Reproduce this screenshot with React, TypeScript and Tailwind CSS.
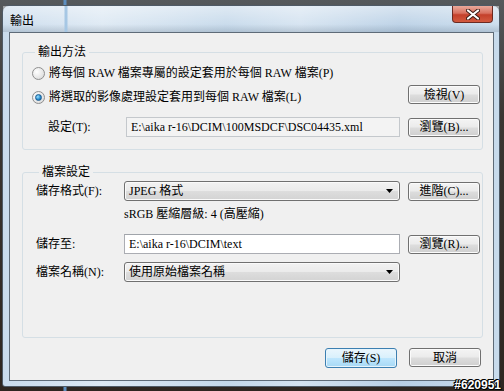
import React from 'react'

// Vista-style "輸出" dialog

const btn =
  'flex items-center justify-center h-[19px] w-[72px] rounded-[3px] border border-[#707070] bg-[linear-gradient(to_bottom,#f4f4f4_0%,#ebebeb_48%,#dddddd_52%,#cfcfcf_100%)] shadow-[inset_0_0_0_1px_#fbfbfb] text-[12px] leading-none text-black'

const Button = ({ label, primary = false, w = 'w-[72px]' }: { label: string; primary?: boolean; w?: string }) => (
  <div
    className={
      primary
        ? `flex items-center justify-center h-[20px] ${w} rounded-[3px] border border-[#3c7fb1] bg-[linear-gradient(to_bottom,#eaf6fd_0%,#d9f0fc_48%,#bee6fd_52%,#a7d9f5_100%)] shadow-[inset_0_0_0_1px_#e6f4fc] text-[12px] leading-none text-black`
        : `${btn} ${w}`
    }
  >
    {label}
  </div>
)

const Dropdown = ({ value }: { value: string }) => (
  <div className="flex items-center h-[20px] w-[276px] rounded-[3px] border border-[#707070] bg-[linear-gradient(to_bottom,#f2f2f2_0%,#ebebeb_48%,#dddddd_52%,#d3d3d3_100%)] shadow-[inset_0_0_0_1px_#fafafa] pl-[4px] pr-[4px] text-[12px] text-black">
    <span className="flex-1">{value}</span>
    <svg width="8" height="5" viewBox="0 0 8 5" className="mr-[1px]">
      <path d="M0 0h7L3.5 4z" fill="#000" />
    </svg>
  </div>
)

const Radio = ({ checked }: { checked?: boolean }) => (
  <div className="flex items-center justify-center w-[13px] h-[13px] rounded-full border border-[#8f8f8f] bg-[radial-gradient(circle_at_35%_35%,#ffffff_0%,#e6e6e6_60%,#d0d0d0_100%)]">
    {checked && (
      <div className="w-[7px] h-[7px] rounded-full bg-[radial-gradient(circle_at_35%_35%,#9ce1ff_0%,#2a8fd0_55%,#0d4f8a_100%)] border border-[#1c5d92]" />
    )}
  </div>
)

export default function App() {
  return (
    <div className="relative w-[504px] h-[391px] overflow-hidden bg-[linear-gradient(to_right,transparent_63px,#5d8fc0_64px,#5d8fc0_66px,transparent_67px),linear-gradient(to_bottom,#55595c_0%,#3b3632_30%,#2e2620_100%)] pt-[5px] pl-[2px] font-['Liberation_Serif','Noto_Sans_CJK_TC',serif] text-black">
      {/* window frame */}
      <div className="w-[498px] h-[382px] rounded-t-[7px] rounded-b-[3px] border border-[#4e5a66] bg-[linear-gradient(to_right,#c9dbec_0%,#dce8f3_20%,#c4d8ea_45%,#d3e2f0_60%,#b8cfe5_80%,#c8dbec_100%)] flex flex-col">
        {/* title bar */}
        <div className="h-[26px] flex items-start bg-[linear-gradient(to_right,transparent_61px,#a6c7e4_62px,#a6c7e4_64px,transparent_65px),linear-gradient(to_bottom,rgba(255,255,255,0.45)_0%,rgba(255,255,255,0.1)_70%,rgba(80,95,110,0.2)_100%)]">
          <span className="ml-[7px] mt-[8px] text-[12px] leading-[14px]">輸出</span>
          <div className="ml-auto mr-[6px] w-[41px] h-[17px] rounded-b-[4px] border border-t-0 border-[#6b2a22] bg-[linear-gradient(to_bottom,#e9a99b_0%,#d8705f_45%,#c4402b_55%,#d35a3f_100%)] flex items-center justify-center">
            <svg width="14" height="11" viewBox="0 0 14 11">
              <path d="M2 1.5l10 8M12 1.5l-10 8" stroke="#3a1a14" strokeWidth="4" strokeLinecap="round" />
              <path d="M2 1.5l10 8M12 1.5l-10 8" stroke="#ffffff" strokeWidth="2.2" strokeLinecap="round" />
            </svg>
          </div>
        </div>

        {/* client area */}
        <div className="ml-[6px] w-[485px] h-[349px] border border-[#5e6b78] bg-[#f0f0f0] flex flex-col">
          {/* 輸出方法 */}
          <fieldset className="mt-[11px] ml-[12px] w-[461px] rounded-[3px] border border-[#d5dfe5] pl-[9px] pr-[2px] pb-[12px]">
            <legend className="ml-[3px] px-[3px] text-[12px] leading-[16px]">輸出方法</legend>
            <div className="mt-[5px] h-[16px] flex items-center gap-[4px] text-[12px]">
              <Radio />
              <span>將每個 RAW 檔案專屬的設定套用於每個 RAW 檔案(P)</span>
            </div>
            <div className="mt-[4px] h-[20px] flex justify-between">
              <div className="self-end h-[16px] flex items-center gap-[4px] text-[12px]">
                <Radio checked />
                <span>將選取的影像處理設定套用到每個 RAW 檔案(L)</span>
              </div>
              <Button label="檢視(V)" />
            </div>
            <div className="mt-[12px] h-[20px] flex items-center">
              <span className="ml-[16px] w-[78px] text-[12px]">設定(T):</span>
              <div className="h-[20px] w-[274px] border border-[#c4c8cc] bg-[#f3f3f3] flex items-center pl-[4px] text-[12px] overflow-hidden whitespace-nowrap">
                E:\aika r-16\DCIM\100MSDCF\DSC04435.xml
              </div>
              <div className="ml-auto">
                <Button label="瀏覽(B)..." />
              </div>
            </div>
          </fieldset>

          {/* 檔案設定 */}
          <fieldset className="mt-[14px] ml-[12px] w-[461px] h-[174px] rounded-[3px] border border-[#d5dfe5] pl-[13px] pr-[2px]">
            <legend className="ml-[3px] px-[3px] text-[12px] leading-[16px]">檔案設定</legend>
            <div className="mt-[1px] h-[20px] flex items-center">
              <span className="w-[88px] text-[12px]">儲存格式(F):</span>
              <Dropdown value="JPEG 格式" />
              <div className="ml-auto">
                <Button label="進階(C)..." />
              </div>
            </div>
            <div className="mt-[5px] h-[16px] ml-[88px] text-[12px] leading-[16px]">sRGB 壓縮層級: 4 (高壓縮)</div>
            <div className="mt-[12px] h-[20px] flex items-center">
              <span className="w-[88px] text-[12px]">儲存至:</span>
              <div className="h-[20px] w-[276px] border border-[#abadb3] border-t-[#a0a4aa] bg-white flex items-center pl-[4px] text-[12px]">
                E:\aika r-16\DCIM\text
              </div>
              <div className="ml-auto">
                <Button label="瀏覽(R)..." />
              </div>
            </div>
            <div className="mt-[8px] h-[20px] flex items-center">
              <span className="w-[88px] text-[12px]">檔案名稱(N):</span>
              <Dropdown value="使用原始檔案名稱" />
            </div>
          </fieldset>

          {/* bottom buttons */}
          <div className="mt-[10px] mr-[12px] flex justify-end gap-[12px]">
            <Button label="儲存(S)" primary />
            <Button label="取消" />
          </div>
        </div>
      </div>

      {/* watermark */}
      <span className="absolute right-[3px] bottom-[-1px] font-['Liberation_Sans',sans-serif] font-bold text-[12px] leading-[13px] text-white [text-shadow:1px_0_#000,-1px_0_#000,0_1px_#000,0_-1px_#000,1px_1px_#000,-1px_-1px_#000]">
        #620951
      </span>
    </div>
  )
}
